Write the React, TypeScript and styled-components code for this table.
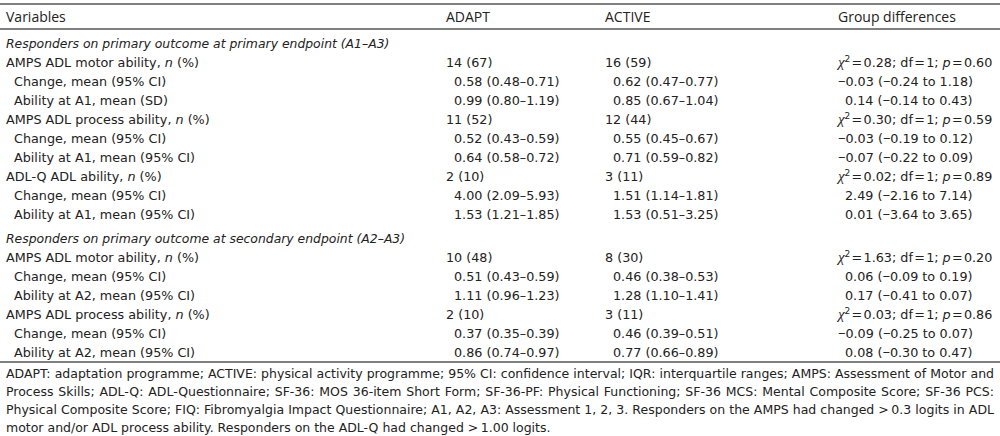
import React from "react";
import styled, { createGlobalStyle } from "styled-components";

const Global = createGlobalStyle`
  html, body { margin: 0; padding: 0; background: #ffffff; }
  body { font-family: "DejaVu Sans", Verdana, sans-serif; color: #222222; }
`;

const Wrap = styled.div`
  width: 1000px;
  padding-top: 3px;
`;

const Table = styled.table`
  width: 1000px;
  border-collapse: collapse;
  table-layout: fixed;
  border-top: 2px solid #808080;
  border-bottom: 2px solid #808080;
  font-size: 12.75px;
`;

const HeadRow = styled.tr`
  height: 25px;
  border-bottom: 2px solid #808080;
`;

const HeadCell = styled.th`
  font-family: "Open Sans", sans-serif;
  font-size: 14px;
  font-weight: 400;
  text-align: left;
  padding: 0 6px;
  line-height: 18px;
  vertical-align: middle;
`;

type Kind = "section" | "parent" | "child1" | "child2";

const heights: Record<Kind, number> = {
  section: 24,
  parent: 19,
  child1: 20,
  child2: 18,
};

const Row = styled.tr<{ $kind: Kind }>`
  height: ${(p) => heights[p.$kind]}px;
`;

const Cell = styled.td<{ $kind: Kind }>`
  padding: 0 6px 0 ${(p) => (p.$kind === "child1" || p.$kind === "child2" ? 14 : 6)}px;
  line-height: 16px;
  white-space: nowrap;
  vertical-align: middle;
`;

const GroupCell = styled(Cell)<{ $shift?: boolean }>`
  padding-left: ${(p) => (p.$shift ? 13 : 6)}px;
`;

const SectionCell = styled.td`
  padding: 0 6px 1px 6px;
  font-size: 12.4px;
  line-height: 16px;
  font-style: italic;
  vertical-align: bottom;
  white-space: nowrap;
`;

const Minus = styled.span`
  font-family: "Liberation Sans", Arial, sans-serif;
`;

const Chi = styled.span`
  font-family: "Liberation Serif", serif;
  font-style: italic;
  font-size: 15px;
`;

const Sup = styled.sup`
  font-size: 9px;
  line-height: 0;
  vertical-align: 5px;
`;

const Note = styled.p`
  margin: 2px 0 0;
  padding: 0 6px;
  font-size: 12.5px;
  line-height: 18px;
  text-align: justify;
`;

type Stat = { chi: string; p: string };
type Line = {
  kind: "parent" | "child1" | "child2";
  label: string;
  adapt: string;
  active: string;
  diff?: string;
  stat?: Stat;
};
type Section = { title: string; rows: Line[] };

const sections: Section[] = [
  {
    title: "Responders on primary outcome at primary endpoint (A1–A3)",
    rows: [
      { kind: "parent", label: "AMPS ADL motor ability, ", adapt: "14 (67)", active: "16 (59)", stat: { chi: "0.28", p: "0.60" } },
      { kind: "child1", label: "Change, mean (95% CI)", adapt: "0.58 (0.48–0.71)", active: "0.62 (0.47–0.77)", diff: "−0.03 (−0.24 to 1.18)" },
      { kind: "child2", label: "Ability at A1, mean (SD)", adapt: "0.99 (0.80–1.19)", active: "0.85 (0.67–1.04)", diff: "0.14 (−0.14 to 0.43)" },
      { kind: "parent", label: "AMPS ADL process ability, ", adapt: "11 (52)", active: "12 (44)", stat: { chi: "0.30", p: "0.59" } },
      { kind: "child1", label: "Change, mean (95% CI)", adapt: "0.52 (0.43–0.59)", active: "0.55 (0.45–0.67)", diff: "−0.03 (−0.19 to 0.12)" },
      { kind: "child2", label: "Ability at A1, mean (95% CI)", adapt: "0.64 (0.58–0.72)", active: "0.71 (0.59–0.82)", diff: "−0.07 (−0.22 to 0.09)" },
      { kind: "parent", label: "ADL-Q ADL ability, ", adapt: "2 (10)", active: "3 (11)", stat: { chi: "0.02", p: "0.89" } },
      { kind: "child1", label: "Change, mean (95% CI)", adapt: "4.00 (2.09–5.93)", active: "1.51 (1.14–1.81)", diff: "2.49 (−2.16 to 7.14)" },
      { kind: "child2", label: "Ability at A1, mean (95% CI)", adapt: "1.53 (1.21–1.85)", active: "1.53 (0.51–3.25)", diff: "0.01 (−3.64 to 3.65)" },
    ],
  },
  {
    title: "Responders on primary outcome at secondary endpoint (A2–A3)",
    rows: [
      { kind: "parent", label: "AMPS ADL motor ability, ", adapt: "10 (48)", active: "8 (30)", stat: { chi: "1.63", p: "0.20" } },
      { kind: "child1", label: "Change, mean (95% CI)", adapt: "0.51 (0.43–0.59)", active: "0.46 (0.38–0.53)", diff: "0.06 (−0.09 to 0.19)" },
      { kind: "child2", label: "Ability at A2, mean (95% CI)", adapt: "1.11 (0.96–1.23)", active: "1.28 (1.10–1.41)", diff: "0.17 (−0.41 to 0.07)" },
      { kind: "parent", label: "AMPS ADL process ability, ", adapt: "2 (10)", active: "3 (11)", stat: { chi: "0.03", p: "0.86" } },
      { kind: "child1", label: "Change, mean (95% CI)", adapt: "0.37 (0.35–0.39)", active: "0.46 (0.39–0.51)", diff: "−0.09 (−0.25 to 0.07)" },
      { kind: "child2", label: "Ability at A2, mean (95% CI)", adapt: "0.86 (0.74–0.97)", active: "0.77 (0.66–0.89)", diff: "0.08 (−0.30 to 0.47)" },
    ],
  },
];

function Signed({ text }: { text: string }) {
  const parts = text.split("−");
  return (
    <>
      {parts.map((part, i) => (
        <React.Fragment key={i}>
          {i > 0 && <Minus>−</Minus>}
          {part}
        </React.Fragment>
      ))}
    </>
  );
}

function StatText({ s }: { s: Stat }) {
  return (
    <>
      <Chi>χ</Chi>
      <Sup>2</Sup>
      {"\u200a=\u200a"}
      {s.chi}; df{"\u200a=\u200a"}1; <i>p</i>
      {"\u200a=\u200a"}
      {s.p}
    </>
  );
}

export default function App() {
  return (
    <Wrap>
      <Global />
      <Table>
        <colgroup>
          <col style={{ width: 440 }} />
          <col style={{ width: 159 }} />
          <col style={{ width: 233 }} />
          <col style={{ width: 168 }} />
        </colgroup>
        <thead>
          <HeadRow>
            <HeadCell>Variables</HeadCell>
            <HeadCell>ADAPT</HeadCell>
            <HeadCell>ACTIVE</HeadCell>
            <HeadCell>Group differences</HeadCell>
          </HeadRow>
        </thead>
        <tbody>
          {sections.map((sec) => (
            <React.Fragment key={sec.title}>
              <Row $kind="section">
                <SectionCell colSpan={4}>{sec.title}</SectionCell>
              </Row>
              {sec.rows.map((r, i) => {
                const neg = r.diff ? r.diff.startsWith("−") : true;
                return (
                  <Row $kind={r.kind} key={i}>
                    <Cell $kind={r.kind}>
                      {r.label}
                      {r.kind === "parent" && (
                        <>
                          <i>n</i> (%)
                        </>
                      )}
                    </Cell>
                    <Cell $kind={r.kind}>{r.adapt}</Cell>
                    <Cell $kind={r.kind}>{r.active}</Cell>
                    <GroupCell $kind={r.kind} $shift={!neg}>
                      {r.stat ? <StatText s={r.stat} /> : <Signed text={r.diff ?? ""} />}
                    </GroupCell>
                  </Row>
                );
              })}
            </React.Fragment>
          ))}
        </tbody>
      </Table>
      <Note>
        ADAPT: adaptation programme; ACTIVE: physical activity programme; 95% CI: confidence interval; IQR: interquartile
        ranges; AMPS: Assessment of Motor and Process Skills; ADL-Q: ADL-Questionnaire; SF-36: MOS 36-item Short Form;
        SF-36-PF: Physical Functioning; SF-36 MCS: Mental Composite Score; SF-36 PCS: Physical Composite Score; FIQ:
        Fibromyalgia Impact Questionnaire; A1, A2, A3: Assessment 1, 2, 3. Responders on the AMPS had changed
        {" >\u20090.3"} logits in ADL motor and/or ADL process ability. Responders on the ADL-Q had changed
        {" >\u20091.00"} logits.
      </Note>
    </Wrap>
  );
}
